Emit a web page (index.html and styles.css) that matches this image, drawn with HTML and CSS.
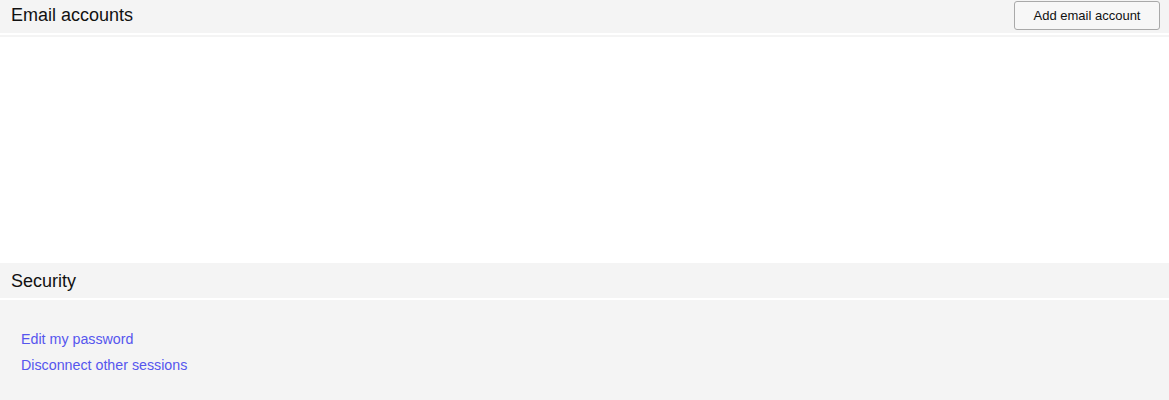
FILE: index.html
```html
<!DOCTYPE html>
<html lang="en">
<head>
<meta charset="utf-8">
<title>Settings</title>
<link rel="stylesheet" href="styles.css">
</head>
<body>
  <section class="panel">
    <header class="panel-head panel-head--accounts">
      <h2 class="panel-title">Email accounts</h2>
      <button class="btn" type="button">Add email account</button>
    </header>
    <div class="panel-body panel-body--accounts"></div>
  </section>
  <section class="panel">
    <header class="panel-head panel-head--security">
      <h2 class="panel-title">Security</h2>
    </header>
    <div class="panel-body panel-body--security">
      <a class="link" href="#">Edit my password</a>
      <a class="link" href="#">Disconnect other sessions</a>
    </div>
  </section>
</body>
</html>
```

FILE: styles.css
```css
html, body {
  margin: 0;
  padding: 0;
  background: #ffffff;
  font-family: "Liberation Sans", Arial, sans-serif;
  color: #111111;
}

.panel-head {
  display: flex;
  align-items: flex-start;
  justify-content: space-between;
  box-sizing: border-box;
  padding: 0 9px 0 11px;
  background: #f4f4f4;
  margin-bottom: 2px;
}

.panel-head--accounts {
  height: 33px;
}

.panel-head--security {
  height: 35px;
}

.panel-title {
  margin: 0;
  font-size: 18px;
  font-weight: normal;
  line-height: 18px;
  padding-top: 6px;
}

.panel-head--security .panel-title {
  padding-top: 9px;
}

.btn {
  height: 29px;
  width: 146px;
  margin-top: 1px;
  padding: 0;
  font-family: inherit;
  font-size: 13px;
  color: #111111;
  background: #f7f7f7;
  border: 1px solid #a9a9a9;
  border-radius: 3px;
}

.panel-body {
  border-top: 2px solid #f4f4f4;
}

.panel-body--accounts {
  height: 226px;
  background: #ffffff;
}

.panel-body--security {
  display: flex;
  flex-direction: column;
  gap: 10px;
  padding: 29px 21px 0;
  background: #f4f4f4;
  height: 100px;
  box-sizing: border-box;
}

.link {
  font-size: 14.25px;
  line-height: 16px;
  color: #5656ee;
  text-decoration: none;
  align-self: flex-start;
}
```
